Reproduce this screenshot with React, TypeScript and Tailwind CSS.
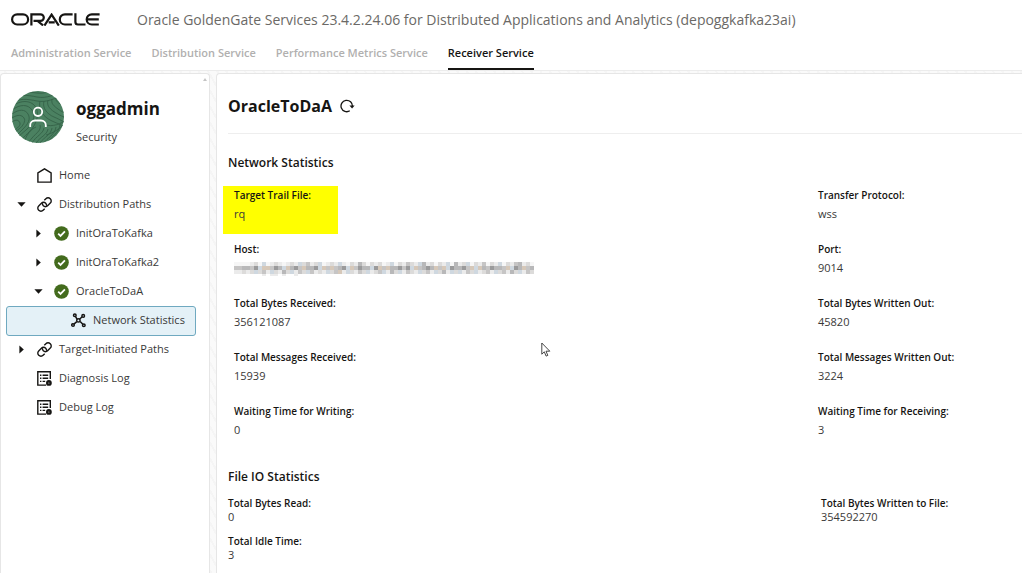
import React from "react";

const tabs = ["Administration Service", "Distribution Service", "Performance Metrics Service", "Receiver Service"];

type Kind = "home" | "link" | "check" | "network" | "log";
type TreeItem = { label: string; icon: Kind; level: number; arrow?: "right" | "down"; selected?: boolean };

const tree: TreeItem[] = [
  { label: "Home", icon: "home", level: 0 },
  { label: "Distribution Paths", icon: "link", level: 0, arrow: "down" },
  { label: "InitOraToKafka", icon: "check", level: 1, arrow: "right" },
  { label: "InitOraToKafka2", icon: "check", level: 1, arrow: "right" },
  { label: "OracleToDaA", icon: "check", level: 1, arrow: "down" },
  { label: "Network Statistics", icon: "network", level: 2, selected: true },
  { label: "Target-Initiated Paths", icon: "link", level: 0, arrow: "right" },
  { label: "Diagnosis Log", icon: "log", level: 0 },
  { label: "Debug Log", icon: "log", level: 0 },
];

const indent = ["pl-[10px]", "pl-[27px]", "pl-[44px]"];

const network: [string, string][] = [
  ["Target Trail File:", "rq"],
  ["Transfer Protocol:", "wss"],
  ["Host:", ""],
  ["Port:", "9014"],
  ["Total Bytes Received:", "356121087"],
  ["Total Bytes Written Out:", "45820"],
  ["Total Messages Received:", "15939"],
  ["Total Messages Written Out:", "3224"],
  ["Waiting Time for Writing:", "0"],
  ["Waiting Time for Receiving:", "3"],
];

const fileIo: [string, string][] = [
  ["Total Bytes Read:", "0"],
  ["Total Bytes Written to File:", "354592270"],
  ["Total Idle Time:", "3"],
];

function OracleLogo() {
  return (
    <svg width="89" height="13" viewBox="0 0 89 13" fill="none" stroke="#161513" strokeWidth="2.2" role="img" aria-label="Oracle">
      <rect x="1.1" y="1.3" width="16" height="10.2" rx="5.1" />
      <path d="M20.4 12.6V1.3h9.1a3.3 3.3 0 0 1 0 6.6h-7M26.5 8l5.6 4.4" />
      <path d="M33.4 12.6 40.6 1.6 47.8 12.6M37.7 9.4h6" />
      <path d="M61.6 1.3h-7.7a5.1 5.1 0 0 0 0 10.2h7" />
      <path d="M64.4 0.2v8.8a2.5 2.5 0 0 0 2.5 2.5h7.6" />
      <path d="M88.6 1.3h-7.8a5.1 5.1 0 0 0 0 10.2h7M76.5 6.4h11.3" />
    </svg>
  );
}

function Avatar() {
  return (
    <svg width="52" height="52" viewBox="0 0 52 52" fill="none" className="shrink-0" aria-hidden="true">
      <defs>
        <clipPath id="disc"><circle cx="26" cy="26" r="26" /></clipPath>
      </defs>
      <g clipPath="url(#disc)">
        <rect width="52" height="52" fill="#4b8161" />
        <g stroke="#356248" strokeWidth="0.9">
          <path d="M0 12c8-5 15-4 25-2s18-3 27-6M0 8c8-5 15-4 25-2s18-3 27-6M3 3c8-3 14-2 22-1s12-2 20-3" />
          <path d="M0 19c8-6 16-6 20 0s1 14-6 20-10 8-14 14M0 23c7-5 13-5 16 0s0 10-5 15-8 8-12 12M0 27c6-4 10-3 12 0s-1 8-5 11-7 6-10 9M0 15c9-6 18-6 23 0s2 18-5 25-9 9-12 13M0 31c4-3 7-2 8 1s-5 7-9 10" />
          <path d="M28 10c-2 8 3 16 12 20s9 4 14 6M32 10c-2 7 3 13 10 16s8 4 12 6M36 9c-2 6 3 10 8 13s6 3 10 5M40 8c-1 5 2 7 6 10s5 3 8 4M44 6c-1 4 2 6 8 9" />
          <path d="M24 36c-5 2-10 8-12 16M28 34c2 6-5 8-12 18M32 37c-1 6-8 8-12 15M36 38c-1 6-8 8-12 14M40 37c-1 7-8 9-12 15M44 36c-1 8-9 11-12 16M48 34c-1 8-8 11-12 17M31 32c6 5 15 2 22-2M34 44c7-2 14-6 19-12" />
        </g>
      </g>
      <g stroke="#fff" strokeWidth="1.8">
        <circle cx="26" cy="20.8" r="4.2" />
        <path d="M18.2 36v-1.7a4.8 4.8 0 0 1 4.8-4.8h6a4.8 4.8 0 0 1 4.8 4.8V36" />
      </g>
    </svg>
  );
}

function TreeIcon({ kind }: { kind: Kind }) {
  if (kind === "check")
    return (
      <svg width="15" height="15" viewBox="0 0 15 15" fill="none" aria-hidden="true">
        <circle cx="7.5" cy="7.5" r="7.3" fill="#436b1d" />
        <path d="m4.2 7.7 2.3 2.2 4.4-4.5" stroke="#fff" strokeWidth="1.8" />
      </svg>
    );
  if (kind === "home")
    return (
      <svg width="15" height="15" viewBox="0 0 15 15" fill="none" stroke="#161513" strokeWidth="1.4" aria-hidden="true">
        <path d="M.9 14.1V5L7.5.8 14.1 5v9.1z" />
      </svg>
    );
  if (kind === "link")
    return (
      <svg width="15" height="15" viewBox="0 0 15 15" fill="none" stroke="#161513" strokeWidth="1.4" aria-hidden="true">
        <path d="M7.3 3.3 8.9 1.7a3 3 0 0 1 4.3 0l.1.1a3 3 0 0 1 0 4.3L10.6 8.8a3 3 0 0 1-4.3 0 3 3 0 0 1-.8-2.7" />
        <path d="M7.7 11.7 6.1 13.3a3 3 0 0 1-4.3 0l-.1-.1a3 3 0 0 1 0-4.3L4.4 6.2a3 3 0 0 1 4.3 0 3 3 0 0 1 .8 2.7" />
      </svg>
    );
  if (kind === "network")
    return (
      <svg width="15" height="15" viewBox="0 0 15 15" fill="none" stroke="#161513" strokeWidth="1.5" aria-hidden="true">
        <path d="m6.2 6.3-1.8-3M8.5 6.2l2.7-2.5M5.8 8.6l-2.9 2.5M9.2 8.5l2.6 2.7" />
        <circle cx="7.4" cy="7.4" r="1.7" />
        <circle cx="3.8" cy="2.2" r="1.3" />
        <circle cx="12.2" cy="2.9" r="1.3" />
        <circle cx="2" cy="12" r="1.3" />
        <circle cx="12.8" cy="12.2" r="1.3" />
      </svg>
    );
  return (
    <svg width="15" height="15" viewBox="0 0 15 15" fill="none" stroke="#161513" strokeWidth="1.4" aria-hidden="true">
      <path d="M13.3 8V.8H.8v13.3h8.3" />
      <path d="M3 4.2h1.4M5.6 4.2h5.6M3 7.2h1.4M5.6 7.2h5.6M3 10.4h1.4M5.6 10.4h2.6" />
      <circle cx="11.9" cy="11.9" r="1.7" strokeWidth="2.4" />
    </svg>
  );
}

function Arrow({ dir }: { dir: "right" | "down" }) {
  return (
    <svg width="9" height="9" viewBox="0 0 9 9" fill="#161513" aria-hidden="true">
      {dir === "down" ? <path d="M.4 2.2h8.2L4.5 6.8z" /> : <path d="M2.4.4v8.2L6.8 4.5z" />}
    </svg>
  );
}

/* Redacted host name, drawn as a mosaic: one shade index per 4px cell. */
const mosaic = [
  "000012030121012132412301213102152021201302142135120213051230214021302145120",
  "445547366475365746557364645736475537646557473645756463755746365475546375645",
  "112123241321523142341213246132142312431523142132413251323142312413241523142",
  "000000010110100100000000000000000000000000000000000000000000000000000000000",
];
const shades = ["#f6f6f6", "#ebebeb", "#dcdbda", "#cfd8e0", "#c6c5c5", "#b8b8b9", "#d6c8b9", "#9a9a9b"];

function MaskedHost() {
  return (
    <svg width="302" height="16" viewBox="0 0 302 16" role="img" aria-label="Hidden">
      {mosaic.map((row, r) =>
        row.split("").map((s, c) =>
          r === 3 && s === "0" ? null : (
            <rect
              key={`${c}-${r}`}
              x={c * 4}
              y={2 + r * 4}
              width="4"
              height={r === 3 ? 2 : 4}
              fill={shades[Number(s)]}
            />
          ),
        ),
      )}
    </svg>
  );
}

export default function App() {
  return (
    <div className="flex h-screen min-h-0 flex-col overflow-hidden bg-[#fafafa] font-['Open_Sans',sans-serif] text-[#3a3938]">
      <header className="shrink-0 border-b border-[#ececec] bg-white">
        <div className="flex h-9 items-center gap-[37px] pt-0.5 pl-[11px]">
          <OracleLogo />
          <span className="text-[14px] whitespace-nowrap text-[#6b6966]">
            Oracle GoldenGate Services 23.4.2.24.06 for Distributed Applications and Analytics (depoggkafka23ai)
          </span>
        </div>
        <nav className="flex h-[34px] gap-5 pl-[11px] text-[11px] font-semibold whitespace-nowrap">
          {tabs.map((t, i) => (
            <a
              key={t}
              href="#"
              className={
                i === 3
                  ? "flex items-center border-b-2 border-[#161513] pt-0.5 text-[#161513]"
                  : "flex items-center border-b-2 border-transparent pt-0.5 text-[#b1b0af]"
              }
            >
              {t}
            </a>
          ))}
        </nav>
      </header>

      <div className="flex min-h-0 flex-1 gap-1.5 bg-[repeating-linear-gradient(60deg,#fafafa_0_6px,#f5f5f5_6px_8px)] pt-0.5">
        <aside className="relative w-[210px] shrink-0 rounded-t border border-b-0 border-[#e6e6e6] bg-white">
          <svg className="absolute top-1 right-0.5" width="4" height="3" viewBox="0 0 4 3" fill="#c4c4c4" aria-hidden="true">
            <path d="M2 0l2 3H0z" />
          </svg>
          <div className="flex items-start gap-3 pt-[17px] pl-[11px]">
            <Avatar />
            <div className="flex flex-col pt-1.5">
              <span className="text-[17px] leading-[24px] font-bold text-[#161513]">oggadmin</span>
              <a href="#" className="mt-2 text-[11px] leading-4">Security</a>
            </div>
          </div>
          <ul className="mt-4 ml-[5px] mr-[13px]">
            {tree.map((it) => (
              <li key={it.label} className="flex h-[29px] items-center">
                <button
                  type="button"
                  className={`flex h-[30px] w-full shrink-0 items-center rounded-[3px] border text-[11px] whitespace-nowrap ${indent[it.level]} ${
                    it.selected ? "border-[#6fa9c0] bg-[#e4f1f7]" : "border-transparent"
                  }`}
                >
                  <span className="flex w-5 shrink-0">{it.arrow && <Arrow dir={it.arrow} />}</span>
                  <span className="mr-[7px] shrink-0"><TreeIcon kind={it.icon} /></span>
                  {it.label}
                </button>
              </li>
            ))}
          </ul>
        </aside>

        <main className="relative isolate min-w-0 flex-1 rounded-tl border-t border-l border-[#e6e6e6] bg-white pl-[11px]">
          <div className="flex h-[60px] items-center gap-2 border-b border-[#eeeeee] pt-1">
            <h1 className="text-[16px] font-bold text-[#161513]">OracleToDaA</h1>
            <button type="button" aria-label="Refresh">
              <svg width="15" height="14" viewBox="0 0 15 14" fill="none" stroke="#161513" strokeWidth="1.3" aria-hidden="true">
                <path d="M9.8 11.8A5.7 5.7 0 1 1 12.4 7.4" />
                <path d="M9.4 6.6h5.2L12.1 9.6z" fill="#161513" stroke="none" />
              </svg>
            </button>
          </div>

          <section>
            <h2 className="mt-[19px] text-[12px] leading-5 font-semibold text-[#161513]">Network Statistics</h2>
            <dl className="mt-[13px] grid grid-cols-[584fr_204fr] pl-1.5">
              {network.map(([label, value], i) => (
                <div key={label} className="relative h-[54px] whitespace-nowrap">
                  {i === 0 && <span className="absolute top-0 -left-[11px] -z-10 h-12 w-[115px] bg-[#ffff00]" />}
                  <dt className="text-[10px] leading-[18px] font-semibold text-[#161513]">{label}</dt>
                  <dd className="flex h-5 items-center text-[11px]">{label === "Host:" ? <MaskedHost /> : value}</dd>
                </div>
              ))}
            </dl>
          </section>

          <section>
            <h2 className="mt-[11px] text-[12px] leading-5 font-semibold text-[#161513]">File IO Statistics</h2>
            <dl className="mt-[10px] grid grid-cols-[593fr_201fr]">
              {fileIo.map(([label, value]) => (
                <div key={label} className="h-[38px] whitespace-nowrap">
                  <dt className="text-[10px] leading-[13px] font-semibold text-[#161513]">{label}</dt>
                  <dd className="text-[11px] leading-[13px]">{value}</dd>
                </div>
              ))}
            </dl>
          </section>

          <svg className="absolute top-[268px] left-[324px]" width="10" height="16" viewBox="0 0 10 16" fill="#fff" stroke="#333" strokeWidth="0.9" aria-hidden="true">
            <path d="M.8 1v11.2l2.5-2.4 1.8 4.3 1.7-.7L5 9.2h3.8z" />
          </svg>
        </main>
      </div>
    </div>
  );
}
